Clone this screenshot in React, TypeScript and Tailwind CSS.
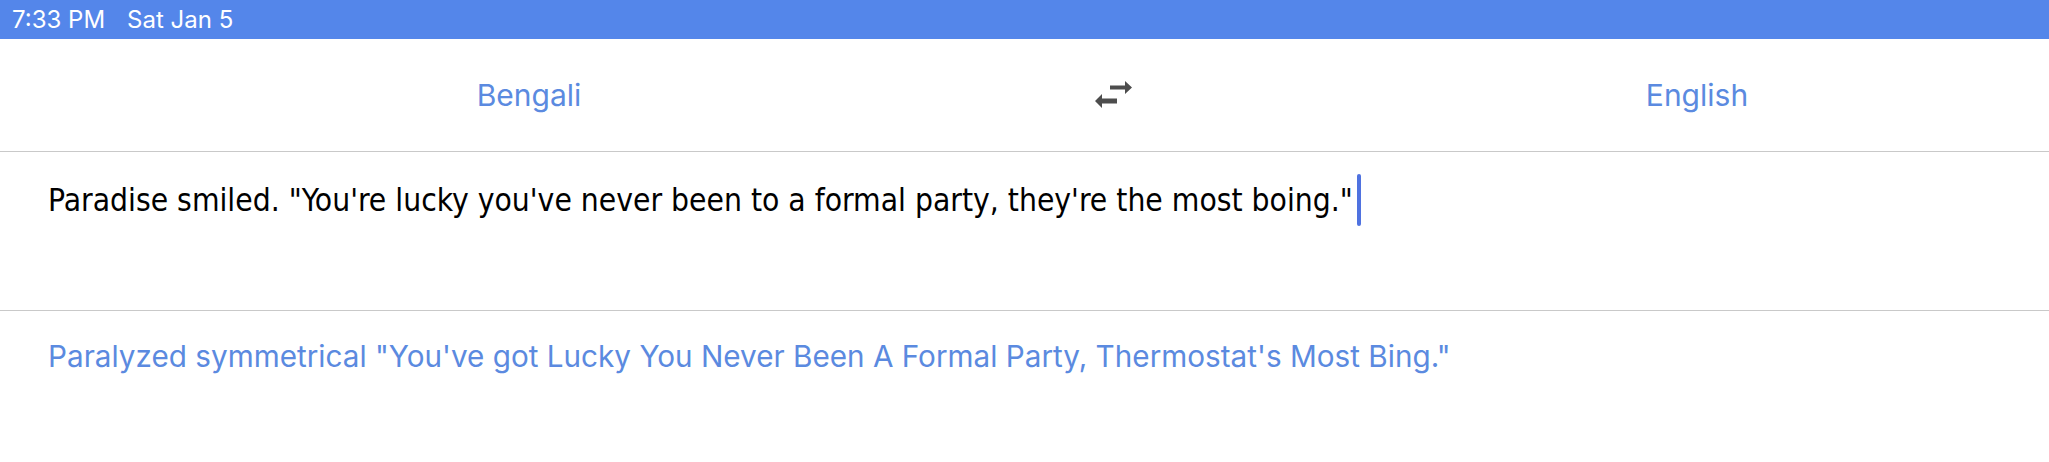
function SwapIcon() {
  return (
    <svg width="37" height="28" viewBox="0 0 37 28" className="text-[#4d4d4d]">
      <path d="M15 4.5H30V0L37 6.5 30 13V8.5H15Z" fill="currentColor" />
      <path d="M22 17.5H7V13L0 20 7 27V22.5H22Z" fill="currentColor" />
    </svg>
  );
}

export default function App() {
  return (
    <div className="w-[2049px] h-[462px] bg-white overflow-hidden flex flex-col">
      {/* status bar */}
      <div className="h-[39px] shrink-0 bg-[#5486ea] flex items-center pl-[12px] text-white text-[24px] font-['Inter',sans-serif] gap-[22px]">
        <span>7:33 PM</span>
        <span>Sat Jan 5</span>
      </div>

      {/* language picker */}
      <div className="h-[113px] shrink-0 border-b border-[#c9c9c9] flex items-center pl-[237px] font-['Inter',sans-serif] text-[30px] text-[#5b8ae0]">
        <button className="w-[584px] flex justify-center">Bengali</button>
        <div className="w-[584px] flex justify-center">
          <SwapIcon />
        </div>
        <button className="w-[584px] flex justify-center">English</button>
      </div>

      {/* source text */}
      <div className="h-[159px] shrink-0 border-b border-[#c9c9c9] pl-[48px] pt-[22px]">
        <p className="text-[31.5px] leading-[52px] text-black font-['DejaVu_Sans_Condensed','Liberation_Sans_Narrow',sans-serif] flex items-center">
          Paradise smiled. "You're lucky you've never been to a formal party, they're the most boing."
          <span className="inline-block w-[4px] h-[52px] bg-[#4f72e0] ml-[4px] rounded-full" />
        </p>
      </div>

      {/* translation */}
      <div className="flex-1 pl-[48px] pt-[25px]">
        <p className="text-[29.7px] leading-[40px] text-[#5b8ae0] font-['Inter',sans-serif]">
          Paralyzed symmetrical "You've got Lucky You Never Been A Formal Party, Thermostat's Most Bing."
        </p>
      </div>
    </div>
  );
}
